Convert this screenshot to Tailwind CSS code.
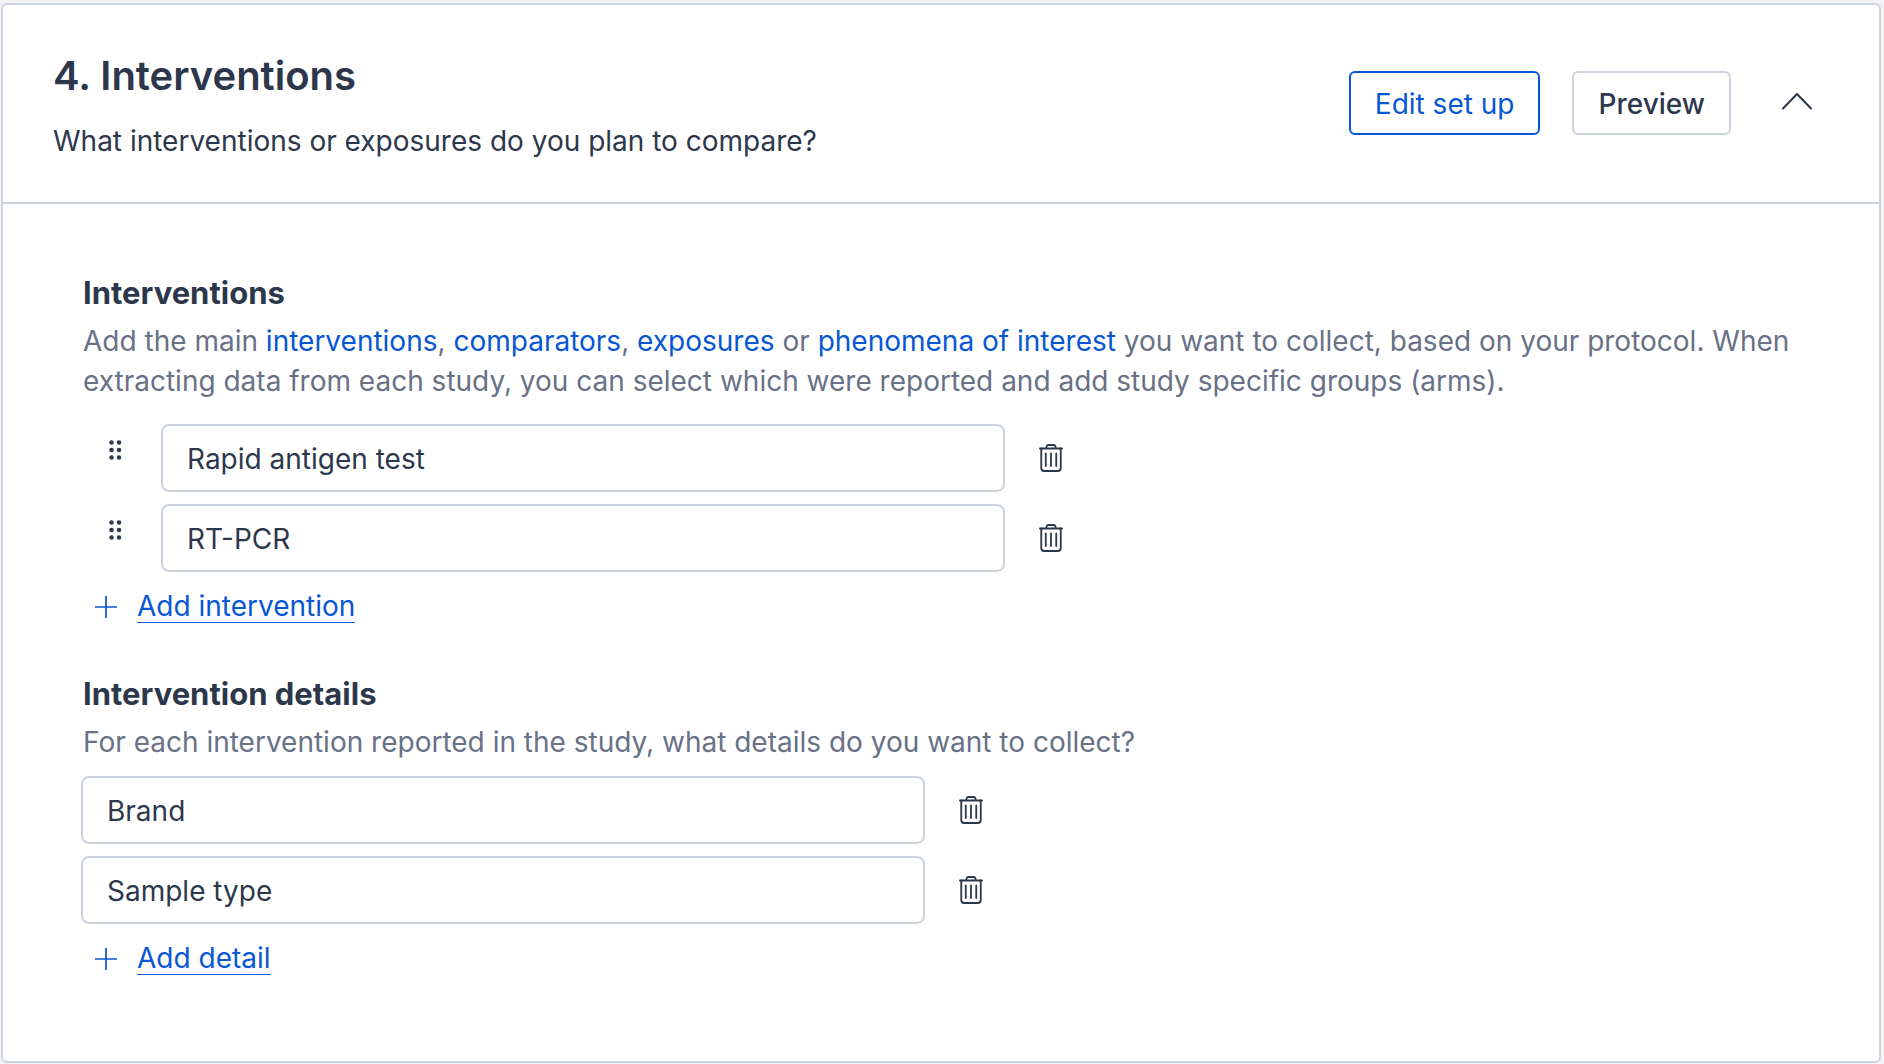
<!DOCTYPE html>
<html lang="en">
<head>
    <meta charset="UTF-8">
    <meta name="viewport" content="width=device-width, initial-scale=1.0">
    <title>Interventions</title>
    <script src="https://cdn.jsdelivr.net/npm/@tailwindcss/browser@4"></script>
</head>
<body class="bg-[#f3f3f4] font-['Inter',sans-serif] text-[28px] leading-10 text-[#2d374b]">
<!-- Shared icons -->
<svg class="hidden">
    <symbol id="icon-trash" viewBox="0 0 24 28" fill="none" stroke="currentColor" stroke-width="1.8" stroke-linecap="round">
        <path d="M.9 4.500h22.2M7 4.200l.7-2Q8.100 1 9.400 1h5.200q1.300 0 1.700 1.200l.7 2"/>
        <path d="M2.250 4.500V24q0 3 3 3h13.500q3 0 3-3V4.500"/>
        <path d="M6.750 9.500v12.500M12 9.500v12.500M17.250 9.500v12.500"/>
    </symbol>
    <symbol id="icon-grip" viewBox="0 0 13 20" fill="currentColor">
        <circle cx="2.500" cy="2.500" r="2.250"/><circle cx="10" cy="2.500" r="2.250"/>
        <circle cx="2.500" cy="10" r="2.250"/><circle cx="10" cy="10" r="2.250"/>
        <circle cx="2.500" cy="17.500" r="2.250"/><circle cx="10" cy="17.500" r="2.250"/>
    </symbol>
    <symbol id="icon-plus" viewBox="0 0 22 22" fill="none" stroke="currentColor" stroke-width="1.700">
        <path d="M11 0v22M0 11h22"/>
    </symbol>
</svg>

<div class="flex min-h-screen flex-col pt-[3px] pr-[3px] pb-px pl-px">
    <section class="flex-1 rounded-md border-2 border-[#cdd3df] bg-white">
        <!-- Header -->
        <header class="flex items-start justify-between border-b-2 border-[#cdd3df] pt-[47px] pr-16 pb-[41px] pl-[50px]">
            <div>
                <h1 class="text-[40px] leading-12 font-semibold">4. Interventions</h1>
                <p class="mt-[21px]">What interventions or exposures do you plan to compare?</p>
            </div>
            <div class="mt-[19px] flex items-center gap-8">
                <button type="button" class="h-16 rounded-md border-2 border-[#0757d3] px-6 pt-0.5 text-[#0757d3]">Edit set up</button>
                <button type="button" class="h-16 rounded-md border-2 border-[#cdd3df] px-6 pt-0.5 font-medium">Preview</button>
                <button type="button" aria-label="Collapse section" class="ml-4 flex h-16 w-9 items-center justify-center pb-1">
                    <svg class="h-[18px] w-8" viewBox="0 0 32 18" fill="none" stroke="currentColor" stroke-width="2" stroke-linecap="round" stroke-linejoin="round"><path d="M2 16.500 16 2l14 14.500"/></svg>
                </button>
            </div>
        </header>

        <div class="px-[78px] pt-[69px] pb-16">
            <!-- Interventions -->
            <h2 class="px-0.5 text-[31px] leading-10 font-bold">Interventions</h2>
            <p class="mt-2 px-0.5 text-[#687186]">
                Add the main <a href="#" class="text-[#0757d3]">interventions</a>, <a href="#" class="text-[#0757d3]">comparators</a>, <a href="#" class="text-[#0757d3]">exposures</a> or <a href="#" class="text-[#0757d3]">phenomena of interest</a> you want to collect, based on your protocol. When extracting data from each study, you can select which were reported and add study specific groups (arms).
            </p>
            <ul class="mt-[23px] flex flex-col gap-3">
                <li class="flex items-center">
                    <button type="button" aria-label="Reorder Rapid antigen test" class="flex h-[68px] w-20 shrink-0 justify-center pt-4 pr-3"><svg class="h-5 w-[13px]"><use href="#icon-grip"/></svg></button>
                    <input type="text" aria-label="Intervention 1" value="Rapid antigen test" class="h-[68px] w-full max-w-[844px] rounded-lg border-2 border-[#cdd3df] px-6 pt-0.5">
                    <button type="button" aria-label="Delete Rapid antigen test" class="ml-[34px]"><svg class="h-7 w-6"><use href="#icon-trash"/></svg></button>
                </li>
                <li class="flex items-center">
                    <button type="button" aria-label="Reorder RT-PCR" class="flex h-[68px] w-20 shrink-0 justify-center pt-4 pr-3"><svg class="h-5 w-[13px]"><use href="#icon-grip"/></svg></button>
                    <input type="text" aria-label="Intervention 2" value="RT-PCR" class="h-[68px] w-full max-w-[844px] rounded-lg border-2 border-[#cdd3df] px-6 pt-0.5">
                    <button type="button" aria-label="Delete RT-PCR" class="ml-[34px]"><svg class="h-7 w-6"><use href="#icon-trash"/></svg></button>
                </li>
            </ul>
            <button type="button" class="mt-[18px] ml-3.5 flex items-center gap-5 text-[#0757d3]">
                <svg class="size-[22px]"><use href="#icon-plus"/></svg>
                <span class="border-b border-[#0757d3] leading-8">Add intervention</span>
            </button>

            <!-- Intervention details -->
            <h2 class="mt-[51px] px-0.5 text-[31px] leading-10 font-bold">Intervention details</h2>
            <p class="mt-2 px-0.5 text-[#687186]">For each intervention reported in the study, what details do you want to collect?</p>
            <ul class="mt-3.5 flex flex-col gap-3">
                <li class="flex items-center">
                    <input type="text" aria-label="Detail 1" value="Brand" class="h-[68px] w-full max-w-[844px] rounded-lg border-2 border-[#cdd3df] px-6 pt-0.5">
                    <button type="button" aria-label="Delete Brand" class="ml-[34px]"><svg class="h-7 w-6"><use href="#icon-trash"/></svg></button>
                </li>
                <li class="flex items-center">
                    <input type="text" aria-label="Detail 2" value="Sample type" class="h-[68px] w-full max-w-[844px] rounded-lg border-2 border-[#cdd3df] px-6 pt-0.5">
                    <button type="button" aria-label="Delete Sample type" class="ml-[34px]"><svg class="h-7 w-6"><use href="#icon-trash"/></svg></button>
                </li>
            </ul>
            <button type="button" class="mt-[18px] ml-3.5 flex items-center gap-5 text-[#0757d3]">
                <svg class="size-[22px]"><use href="#icon-plus"/></svg>
                <span class="border-b border-[#0757d3] leading-8">Add detail</span>
            </button>
        </div>
    </section>
</div>
</body>
</html>
